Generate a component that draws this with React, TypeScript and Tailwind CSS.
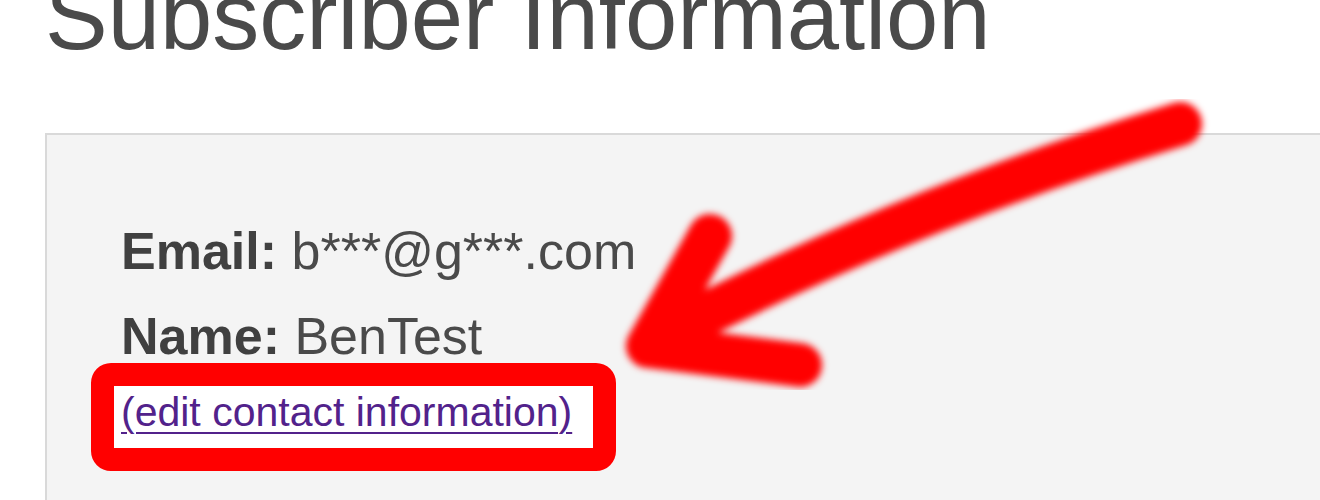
export default function App() {
  return (
    <div className="relative h-[500px] w-[1320px] overflow-hidden bg-white font-['Liberation_Sans',Arial,sans-serif] text-[#4a4a4a]">
      <div className="pl-[45px]">
        <h1 className="mt-[-30px] whitespace-nowrap text-[94px] font-normal leading-[94px] text-[#4a4a4a]">
          Subscriber Information
        </h1>

        <div className="mt-[69px] h-[500px] w-[1400px] border-2 border-[#d9d9d9] bg-[#f4f4f4] pl-[74px] pt-[86px]">
          <p className="whitespace-nowrap text-[52px] leading-[60px]">
            <span className="font-bold text-[#404040]">Email:</span> b***@g***.com
          </p>
          <p className="mt-[25px] whitespace-nowrap text-[52px] leading-[60px]">
            <span className="font-bold text-[#404040]">Name:</span> BenTest
          </p>
          <div className="relative mt-[21px] inline-block">
            {/* red highlight drawn over the screenshot */}
            <div className="absolute left-[-30px] top-[-24px] h-[108px] w-[525px] rounded-[20px] border-[23px] border-[#ff0000] bg-white" />
            <a
              href="#"
              className="relative block whitespace-nowrap text-[41px] leading-[50px] text-[#52228b] underline decoration-2 underline-offset-[6px]"
            >
              (edit contact information)
            </a>
          </div>
        </div>
      </div>

      <svg
        className="pointer-events-none absolute left-0 top-0"
        width="1320"
        height="500"
        viewBox="0 0 1320 500"
      >
        <defs>
          <filter id="soft" x="-10%" y="-10%" width="120%" height="120%">
            <feGaussianBlur stdDeviation="3.5" />
          </filter>
        </defs>
        <g
          filter="url(#soft)"
          fill="none"
          stroke="#ff0000"
          strokeWidth="44"
          strokeLinecap="round"
          strokeLinejoin="round"
        >
          <path d="M 1180 124 Q 900 210 652 342" />
          <path d="M 710 236 L 648 346 L 800 365" />
        </g>
      </svg>
    </div>
  );
}
